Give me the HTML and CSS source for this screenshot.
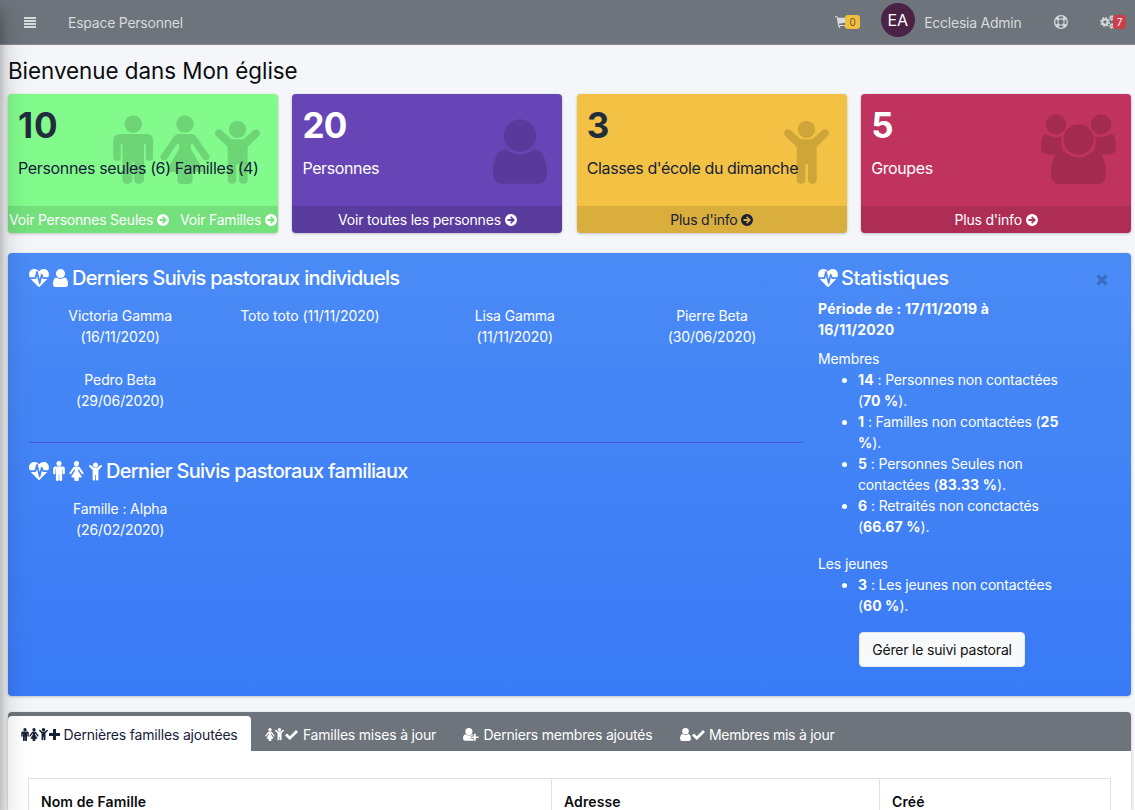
FILE: index.html
```html
<!DOCTYPE html>
<html lang="fr">
<head>
<meta charset="utf-8">
<title>Espace Personnel</title>
<link rel="stylesheet" href="styles.css">
</head>
<body>
<svg class="sprite" aria-hidden="true">
  <symbol id="male" viewBox="0 0 121 208"><circle cx="60.500" cy="27" r="26.500"/><path d="M21 57h79q21 0 21 21v49q0 11-11.500 11T98 127V87h-5v107q0 14-15 14t-15-14v-53h-5v53q0 14-15 14t-15-14V87h-5v40q0 11-11.500 11T0 127V78q0-21 21-21z"/></symbol>
  <symbol id="female" viewBox="0 0 150 208"><circle cx="75" cy="27" r="26.500"/><path d="M57 57h36q10 0 17 10l38 54q4 8-3 14-9 5-16-3L98 87h-5v16l35 58q4 11-8 11H98v23q0 13-13 13H65q-13 0-13-13v-23H30q-12 0-8-11l35-58V87h-5l-31 45q-7 8-16 3-7-6-3-14l38-54q7-10 17-10z"/></symbol>
  <symbol id="child" viewBox="0 0 135 190"><circle cx="67.500" cy="27" r="26"/><path d="M19 29l31 28h35l31-28q9-5 16 2 6 8 0 15L98 80v98q0 12-13 12t-13-12v-46h-8v46q0 12-13 12t-13-12V80L3 46q-6-7 0-15 7-7 16-2z"/></symbol>
  <symbol id="user" viewBox="0 0 161 193"><circle cx="80.500" cy="49" r="48.500"/><path d="M38 90q43 32 85 0c26 0 38 35 38 70q0 33-31 33H31q-31 0-31-33c0-35 12-70 38-70z"/></symbol>
  <symbol id="users" viewBox="0 0 225 211"><circle cx="45" cy="31" r="30.500"/><circle cx="180" cy="31" r="30.500"/><circle cx="112.500" cy="76" r="45.500"/><path d="M15 60q27 17 49 4-8 24 3 43-11 2-22 14H23q-23 0-23-20 0-41 15-41zM210 60q-27 17-49 4 8 24-3 43 11 2 22 14h22q23 0 23-20 0-41-15-41zM66 109q46 41 93 0c26 0 36 36 36 70q0 32-33 32H63q-33 0-33-32c0-34 10-70 36-70z"/></symbol>
  <symbol id="go" viewBox="0 0 12 12"><path fill-rule="evenodd" d="M6 0a6 6 0 100 12A6 6 0 006 0zM6.200 2.200L10 6 6.200 9.800 5 8.600 6.800 6.900H2.500V5.100h4.300L5 3.400z"/></symbol>
  <symbol id="heart" viewBox="0 0 60 54"><path d="M2 25C-4 8 7 0 16 0q8 0 14 7 6-7 14-7c9 0 20 8 14 25H44l-4-9q-2-4-4 0l-4 15-6-24q-2-4-4 0l-5 18zM5 30h14q2 0 3-3l2-6 6 23q2 4 4 0l5-19 2 4q1 1 3 1h11L32 53q-2 2-4 0z"/></symbol>
  <symbol id="plus" viewBox="0 0 11 11"><path d="M4 0h3v4h4v3H7v4H4V7H0V4h4z"/></symbol>
  <symbol id="check" viewBox="0 0 13 10"><path d="M0 5.500L2 3.500 4.800 6.200 11 0l2 2L4.800 10z"/></symbol>
  <symbol id="userplus" viewBox="0 0 49 40"><circle cx="18" cy="11" r="11"/><path d="M8 19q10 8 20 0l2 1v4h-6v9h8v6H6q-6 0-6-7 0-12 8-13zM33 18h6v8h9v5h-9v8h-6v-8h-8v-5h8z"/></symbol>
  <symbol id="cart" viewBox="0 0 39 36"><path d="M0 1h7l2 4h29v14l-26 4v4h24v3H10l-1-3L5 4H0z"/><circle cx="13" cy="33" r="3"/><circle cx="33" cy="33" r="3"/></symbol>
  <symbol id="ring" viewBox="0 0 42 42"><g fill="none" stroke="currentColor"><circle cx="21" cy="21" r="19" stroke-width="4"/><circle cx="21" cy="21" r="9.500" stroke-width="3"/><g stroke-width="9"><path d="M8 8l6 6M34 8l-6 6M8 34l6-6M34 34l-6-6"/></g></g></symbol>
  <symbol id="cogs" viewBox="0 0 45 42"><g fill="none" stroke="currentColor"><circle cx="15" cy="21" r="8" stroke-width="6"/><circle cx="15" cy="21" r="12.500" stroke-width="5" stroke-dasharray="5 4.820"/><circle cx="36" cy="9" r="4.500" stroke-width="4"/><circle cx="36" cy="9" r="7.500" stroke-width="3" stroke-dasharray="3 2.890"/><circle cx="36" cy="33" r="4.500" stroke-width="4"/><circle cx="36" cy="33" r="7.500" stroke-width="3" stroke-dasharray="3 2.890"/></g></symbol>
</svg>

<header class="topbar">
  <span class="burger"><i></i><i></i><i></i><i></i></span>
  <a class="brand">Espace Personnel</a>
  <span class="cart"><svg><use href="#cart"/></svg><b class="badge yellow">0</b></span>
  <span class="avatar">EA</span>
  <a class="name">Ecclesia Admin</a>
  <svg class="help"><use href="#ring"/></svg>
  <span class="cogs"><svg><use href="#cogs"/></svg><b class="badge red">7</b></span>
</header>

<main>
  <h1>Bienvenue dans Mon église</h1>

  <section class="boxes">
    <article class="box green">
      <div class="art"><svg class="a-male"><use href="#male"/></svg><svg class="a-female"><use href="#female"/></svg><svg class="a-child"><use href="#child"/></svg></div>
      <div class="inner"><h3>10</h3><p class="fam">Personnes seules (6) Familles (4)</p></div>
      <footer class="split"><a>Voir Personnes Seules <svg class="go"><use href="#go"/></svg></a><a>Voir Familles <svg class="go"><use href="#go"/></svg></a></footer>
    </article>
    <article class="box purple">
      <div class="art"><svg class="a-user"><use href="#user"/></svg></div>
      <div class="inner"><h3>20</h3><p>Personnes</p></div>
      <footer><a>Voir toutes les personnes <svg class="go"><use href="#go"/></svg></a></footer>
    </article>
    <article class="box amber">
      <div class="art"><svg class="a-child"><use href="#child"/></svg></div>
      <div class="inner"><h3>3</h3><p>Classes d'école du dimanche</p></div>
      <footer><a>Plus d'info <svg class="go"><use href="#go"/></svg></a></footer>
    </article>
    <article class="box rose">
      <div class="art"><svg class="a-users"><use href="#users"/></svg></div>
      <div class="inner"><h3>5</h3><p>Groupes</p></div>
      <footer><a>Plus d'info <svg class="go"><use href="#go"/></svg></a></footer>
    </article>
  </section>

  <section class="pastoral">
    <div class="follow">
      <h4><svg class="i-heart"><use href="#heart"/></svg><svg class="i-user"><use href="#user"/></svg><span>Derniers Suivis pastoraux individuels</span></h4>
      <div class="people">
        <p>Victoria Gamma<br>(16/11/2020)</p>
        <p class="wide">Toto toto (11/11/2020)</p>
        <p>Lisa Gamma<br>(11/11/2020)</p>
        <p>Pierre Beta<br>(30/06/2020)</p>
        <p>Pedro Beta<br>(29/06/2020)</p>
      </div>
      <hr>
      <h4><svg class="i-heart"><use href="#heart"/></svg><svg class="i-male"><use href="#male"/></svg><svg class="i-female"><use href="#female"/></svg><svg class="i-child"><use href="#child"/></svg><span>Dernier Suivis pastoraux familiaux</span></h4>
      <div class="people">
        <p>Famille : Alpha<br>(26/02/2020)</p>
      </div>
    </div>
    <aside class="stats">
      <h4><svg class="i-heart"><use href="#heart"/></svg><span>Statistiques</span><svg class="close" viewBox="0 0 11 11"><path d="M1.500 1.500l8 8M9.500 1.500l-8 8"/></svg></h4>
      <p class="period">Période de : 17/11/2019 à<br>16/11/2020</p>
      <p>Membres</p>
      <ul>
        <li><b>14</b> : Personnes non contactées<br>(<b>70 %</b>).</li>
        <li><b>1</b> : Familles non contactées (<b>25<br>%</b>).</li>
        <li><b>5</b> : Personnes Seules non<br>contactées (<b>83.33 %</b>).</li>
        <li><b>6</b> : Retraités non conctactés<br>(<b>66.67 %</b>).</li>
      </ul>
      <p>Les jeunes</p>
      <ul>
        <li><b>3</b> : Les jeunes non contactées<br>(<b>60 %</b>).</li>
      </ul>
      <button>Gérer le suivi pastoral</button>
    </aside>
  </section>

  <section class="card">
    <nav>
      <a class="active"><svg class="t-male"><use href="#male"/></svg><svg class="t-female"><use href="#female"/></svg><svg class="t-child"><use href="#child"/></svg><svg class="t-plus"><use href="#plus"/></svg><span>Dernières familles ajoutées</span></a>
      <a class="t2"><svg class="t-female"><use href="#female"/></svg><svg class="t-child"><use href="#child"/></svg><svg class="t-check"><use href="#check"/></svg><span>Familles mises à jour</span></a>
      <a class="t3"><svg class="t-userplus"><use href="#userplus"/></svg><span>Derniers membres ajoutés</span></a>
      <a class="t4"><svg class="t-user"><use href="#user"/></svg><svg class="t-check"><use href="#check"/></svg><span>Membres mis à jour</span></a>
    </nav>
    <div class="table">
      <span>Nom de Famille</span><span>Adresse</span><span>Créé</span>
    </div>
  </section>
</main>
</body>
</html>
```
FILE: styles.css
```css
* { box-sizing: border-box; }
html { height: 100%; overflow: hidden; }
body {
  margin: 0; height: 810px; overflow: hidden; background: #f4f6f9; color: #0b0d10;
  font: 14px/21px Inter, "Liberation Sans", sans-serif; white-space: nowrap;
  letter-spacing: -.12px;
}
/* Shadow cast by the collapsed sidebar */
body::before {
  content: ""; position: fixed; left: -250px; top: 0; width: 250px; height: 100vh; z-index: 5;
  box-shadow: 0 14px 28px rgba(0,0,0,.25), 0 10px 10px rgba(0,0,0,.22);
}
.sprite { position: absolute; width: 0; height: 0; }
svg { fill: currentColor; flex: none; display: inline-block; }
h1, h3, h4, p, ul { margin: 0; padding: 0; }

.topbar {
  height: 45px; background: #6d747b; border-bottom: 1px solid #868c92; color: #d8dadc;
  display: flex; align-items: center; padding: 0 9px 0 24px; letter-spacing: -.24px;
}
.burger { display: grid; gap: 1px; width: 12px; margin-right: 32px; }
.burger i { height: 2px; background: currentColor; }
.brand { width: 768px; }
.cart, .cogs { display: flex; align-items: center; position: relative; }
.cart svg { width: 13px; height: 12px; }
.badge { font-size: 10px; line-height: 14px; height: 14px; border-radius: 3px; text-align: center; font-weight: 400; }
.yellow { width: 14.500px; margin-left: -3px; background: #f2be3e; color: #6a5a2c; }
.red { width: 13px; margin-left: -2px; background: #cc3e49; color: #fff; }
.avatar {
  width: 34px; height: 34px; border-radius: 50%; background: #4a2245; color: #fff; margin: -4px 9.500px 0 21px;
  font-size: 16px; line-height: 34px; text-align: center;
}
.name { width: 130px; }
.help { width: 14px; height: 14px; }
.cogs { margin-left: 32px; }
.cogs svg { width: 15px; height: 14px; }

main { padding: 0 4px 0 8px; }
h1 { font-size: 22.400px; font-weight: 400; line-height: 28px; padding-top: 12px; height: 49px; letter-spacing: -.03px; }

.boxes { display: grid; grid-template-columns: repeat(4, 1fr); gap: 14.500px; }
.box {
  position: relative; height: 139px; border-radius: 4px; overflow: hidden; color: #fff;
  display: flex; flex-direction: column; justify-content: space-between;
  box-shadow: 0 0 1px rgba(0,0,0,.13), 0 1px 3px rgba(0,0,0,.2);
}
.green { background: #82fb8c; color: #1f2d3d; }
.purple { background: #6845b6; }
.amber { background: #f3c244; color: #1f2d3d; }
.rose { background: #c1335f; }
.inner { padding: 10px; position: relative; }
h3 { font-size: 35px; line-height: 42px; font-weight: 700; letter-spacing: -.6px; }
.green h3 { letter-spacing: 1px; }
.inner p { font-size: 16px; line-height: 24px; margin-top: 10px; letter-spacing: -.38px; }
.green .inner p { letter-spacing: -.35px; }
.green p, .amber p, .amber footer { color: #17213a; }
.art { position: absolute; right: 18px; top: 21px; height: 69px; display: flex; align-items: flex-end; color: rgba(0,0,0,.15); }
.a-male { width: 40.500px; height: 69px; }
.a-female { width: 50px; height: 69px; margin: 0 4.500px 0 7px; }
.a-child { width: 45px; height: 64px; }
.a-user { width: 54px; height: 65px; }
.a-users { width: 75px; height: 70.500px; }
.purple .art, .rose .art { right: 15px; }
.box footer { height: 27px; line-height: 27px; background: rgba(0,0,0,.1); text-align: center; position: relative; letter-spacing: -.2px; }
.purple footer { background: rgba(0,0,0,.13); }
.green footer { color: #fff; letter-spacing: -.2px; }
.split { display: flex; justify-content: space-between; padding: 0 1px; }
.go { width: 12px; height: 12px; vertical-align: -1px; }

.pastoral {
  margin-top: 20px; height: 443px; border-radius: 4px; color: #fff; display: flex;
  background: linear-gradient(#4a8bf6, #397af6);
  box-shadow: 0 0 1px rgba(0,0,0,.13), 0 1px 3px rgba(0,0,0,.2);
}
.follow { width: 810px; padding: 13px 0 0 21px; }
h4 { display: flex; align-items: center; height: 24px; font-size: 20px; line-height: 24px; font-weight: 500; letter-spacing: -.7px; }
.i-heart { width: 20px; height: 18px; }
.i-user { width: 15px; height: 18px; margin: 0 4px; }
.i-male { width: 12px; height: 20px; margin-left: 4px; }
.i-female { width: 15px; height: 20px; margin-left: 4px; }
.i-child { width: 13px; height: 19px; margin: 0 4px 0 5px; }
.people { display: grid; grid-template-columns: repeat(4, 197.300px); margin: 15px 0 0 -7.500px; row-gap: 22px; text-align: center; }
.people .wide { padding-right: 15px; letter-spacing: -.05px; }
hr { border: 0; height: 1px; background: #4758dc; margin: 31px 15px 16px 0; }
.stats { flex: 1; padding-top: 13px; }
.stats h4 { letter-spacing: -.42px; }
.stats h4 span { margin-left: 3px; }
.close { width: 12px; height: 12px; margin: 3px 23.500px 0 auto; stroke: #386bbd; stroke-width: 2.800; }
.period { font-weight: 700; margin: 8px 0 8px; letter-spacing: .19px; }
.stats ul { padding-left: 40px; margin-bottom: 16px; letter-spacing: -.16px; }
.stats b { font-weight: 700; letter-spacing: .1px; }
button {
  display: block; margin: 0 0 0 41px; width: 166px; height: 35px; border: 1px solid #e6e8ea; border-radius: 4px;
  background: #f8f9fa; color: #101214; font: inherit; letter-spacing: -.2px; padding: 0;
}

.card { margin-top: 16px; background: #fff; height: 98px; border-radius: 4px 4px 0 0; box-shadow: 0 0 1px rgba(0,0,0,.13), 0 1px 3px rgba(0,0,0,.2); }
nav { height: 39px; padding-top: 4px; background: #6d747b; border-radius: 4px 4px 0 0; color: #fff; display: flex; letter-spacing: -.2px; }
nav a { display: flex; align-items: center; height: 35px; padding-top: 2px; }
nav .active { width: 243.400px; padding-left: 12.500px; background: #fff; color: #17213a; border-radius: 4px 4px 0 0; letter-spacing: -.18px; }
.t2 { width: 198.500px; padding-left: 13.500px; }
.t3 { width: 216.500px; padding-left: 13.500px; }
.t4 { padding-left: 13.500px; letter-spacing: -.26px; }
.t-male { width: 8px; height: 13px; }
.t-female { width: 10px; height: 13px; }
.t-child { width: 9px; height: 12.500px; }
.t-plus { width: 11px; height: 11px; margin: 0 4px 0 1px; }
.t-check { width: 13px; height: 10px; margin: 0 5px 0 1px; }
.t4 .t-check { margin-right: 4px; }
.t-userplus { width: 16px; height: 13px; margin-right: 4px; }
.t-user { width: 11px; height: 13px; }
.table {
  display: grid; grid-template-columns: 522px 328px 1fr; width: 1083px; height: 32px; margin: 27px 0 0 20px;
  border: 1px solid #dee2e6; border-bottom: 0; font-weight: 600; letter-spacing: .1px;
}
.table span { padding: 12px 12px 0; height: 31px; overflow: hidden; }
.table span + span { border-left: 1px solid #dee2e6; }
```
